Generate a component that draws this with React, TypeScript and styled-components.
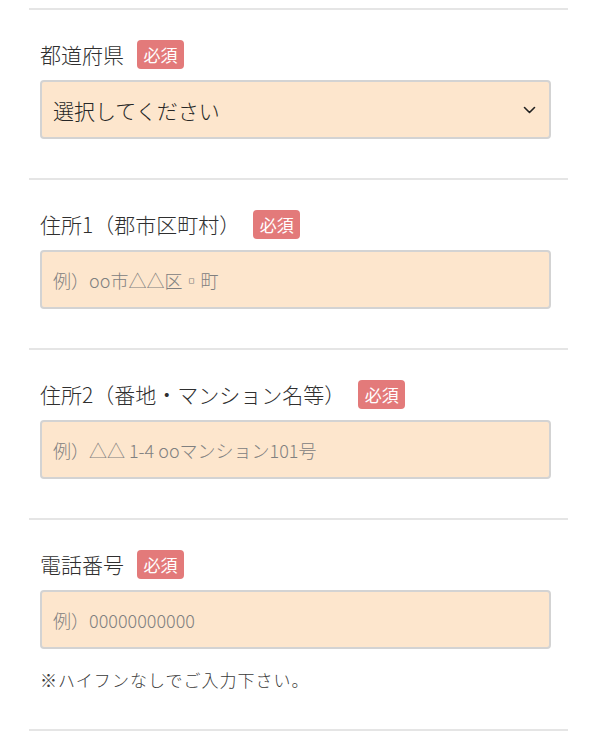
import React from "react";
import styled, { createGlobalStyle } from "styled-components";

const GlobalStyle = createGlobalStyle`
  html, body {
    margin: 0;
    padding: 0;
    background: #ffffff;
    font-family: "Noto Sans CJK JP", "Noto Sans", "Liberation Sans", sans-serif;
  }
  * { box-sizing: border-box; }
`;

const Form = styled.form`
  width: 568px;
  padding: 8px 0 0 29px;
`;

const Section = styled.div<{ $last?: boolean; $pb?: number }>`
  border-top: 2px solid #e5e5e5;
  border-bottom: ${(p) => (p.$last ? "2px solid #e5e5e5" : "none")};
  padding: 30px 17px ${(p) => (p.$pb ?? 39)}px 11px;
`;

const HeaderRow = styled.div`
  display: flex;
  align-items: center;
  gap: 13px;
  height: 29px;
`;

const Label = styled.label`
  font-size: 21px;
  font-weight: 300;
  line-height: 29px;
  color: #2f2f2f;
  white-space: nowrap;
`;

const Badge = styled.span`
  display: inline-flex;
  align-items: center;
  justify-content: center;
  width: 47px;
  height: 29px;
  border-radius: 4px;
  background: #e37a7a;
  color: #ffffff;
  font-size: 17px;
  font-weight: 400;
  line-height: 1;
`;

const FieldBox = styled.div`
  position: relative;
  margin-top: 11px;
  height: 59px;
`;

const TextInput = styled.input`
  width: 100%;
  height: 59px;
  background: #fde6cd;
  border: 2px solid #d3d3d3;
  border-radius: 4px;
  padding: 0 13px 0 11px;
  font-family: inherit;
  font-size: 18px;
  font-weight: 300;
  color: #333333;
  outline: none;
  &::placeholder {
    color: #808080;
  }
`;

const Select = styled.select`
  width: 100%;
  height: 59px;
  appearance: none;
  -webkit-appearance: none;
  background: #fde6cd;
  border: 2px solid #d3d3d3;
  border-radius: 4px;
  padding: 0 40px 0 11px;
  font-family: inherit;
  font-size: 21px;
  font-weight: 300;
  color: #262626;
  outline: none;
`;

const Chevron = styled.svg`
  position: absolute;
  right: 15px;
  top: 50%;
  transform: translateY(-50%);
  pointer-events: none;
`;

const Note = styled.p`
  margin: 18px 0 0;
  font-size: 17px;
  font-weight: 300;
  line-height: 26px;
  letter-spacing: 1px;
  color: #3a3a3a;
`;

type FieldProps = {
  label: string;
  placeholder: string;
};

const InputField: React.FC<FieldProps & { note?: string; last?: boolean }> = ({
  label,
  placeholder,
  note,
  last,
}) => (
  <Section $last={last} $pb={note ? 36 : 39}>
    <HeaderRow>
      <Label>{label}</Label>
      <Badge>必須</Badge>
    </HeaderRow>
    <FieldBox>
      <TextInput placeholder={placeholder} />
    </FieldBox>
    {note && <Note>{note}</Note>}
  </Section>
);

export default function App() {
  return (
    <>
      <GlobalStyle />
      <Form>
        <Section>
          <HeaderRow>
            <Label>都道府県</Label>
            <Badge>必須</Badge>
          </HeaderRow>
          <FieldBox>
            <Select defaultValue="">
              <option value="">選択してください</option>
              <option value="tokyo">東京都</option>
              <option value="osaka">大阪府</option>
            </Select>
            <Chevron width="13" height="8" viewBox="0 0 13 8" fill="none">
              <path d="M1.5 1.5 L6.5 6.5 L11.5 1.5" stroke="#222" strokeWidth="1.6" strokeLinecap="round" strokeLinejoin="round" />
            </Chevron>
          </FieldBox>
        </Section>
        <InputField label="住所1（郡市区町村）" placeholder="例）oo市△△区▫町" />
        <InputField label="住所2（番地・マンション名等）" placeholder="例）△△ 1-4 ooマンション101号" />
        <InputField
          label="電話番号"
          placeholder="例）00000000000"
          note="※ハイフンなしでご入力下さい。"
          last
        />
      </Form>
    </>
  );
}
